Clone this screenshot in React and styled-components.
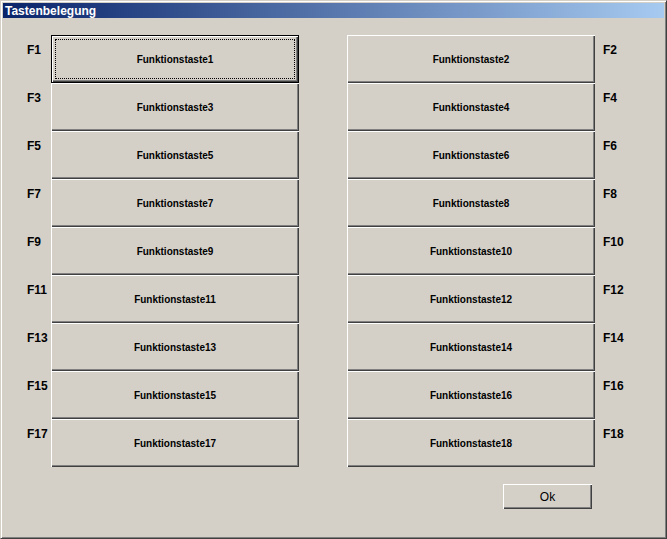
import React from "react";
import styled, { createGlobalStyle } from "styled-components";

const GlobalStyle = createGlobalStyle`
  html, body {
    margin: 0;
    padding: 0;
    background: #d4d0c8;
  }
`;

const rows = Array.from({ length: 9 }, (_, i) => [i * 2 + 1, i * 2 + 2]);

export default function App() {
  return (
    <>
      <GlobalStyle />
      <Window>
        <TitleBar>
          <Title>Tastenbelegung</Title>
        </TitleBar>
        <Panel>
          {rows.map(([l, r]) => (
            <Row key={l}>
              <Label>F{l}</Label>
              <Key $default={l === 1}>Funktionstaste{l}</Key>
              <Key $right>Funktionstaste{r}</Key>
              <Label $right>F{r}</Label>
            </Row>
          ))}
          <Footer>
            <OkButton>Ok</OkButton>
          </Footer>
        </Panel>
      </Window>
    </>
  );
}

const Window = styled.div`
  width: 667px;
  height: 539px;
  box-sizing: border-box;
  background: #d4d0c8;
  border: 1px solid;
  border-color: #d4d0c8 #404040 #404040 #d4d0c8;
  box-shadow: inset 1px 1px 0 #ffffff, inset -1px -1px 0 #808080;
  padding: 2px;
  display: flex;
  flex-direction: column;
  font-family: "Liberation Sans", Arial, sans-serif;
  color: #000;
`;

const TitleBar = styled.div`
  height: 15px;
  display: flex;
  align-items: center;
  padding-left: 2px;
  background: linear-gradient(to right, #0a246a, #a6caf0);
`;

const Title = styled.span`
  color: #fff;
  font-weight: bold;
  font-size: 12px;
`;

const Panel = styled.div`
  display: flex;
  flex-direction: column;
  padding: 17px 0 0 24px;
`;

const Row = styled.div`
  display: flex;
  height: 48px;
`;

const Label = styled.div`
  width: 24px;
  box-sizing: border-box;
  padding-top: 8px;
  padding-left: ${({ $right }) => ($right ? "8px" : "0")};
  font-size: 12px;
  font-weight: bold;
  line-height: 14px;
`;

const Key = styled.div`
  position: relative;
  width: 248px;
  height: 48px;
  box-sizing: border-box;
  margin-left: ${({ $right }) => ($right ? "48px" : "0")};
  display: flex;
  align-items: center;
  justify-content: center;
  font-size: 10px;
  font-weight: bold;
  background: #d4d0c8;
  border: ${({ $default }) => ($default ? "1px solid #000" : "none")};
  box-shadow: inset 1px 1px 0 #ffffff, inset -1px -1px 0 #404040,
    inset -2px -2px 0 #808080;

  &::after {
    content: "";
    display: ${({ $default }) => ($default ? "block" : "none")};
    position: absolute;
    inset: 3px;
    border: 1px dotted #000;
  }
`;

const Footer = styled.div`
  width: 565px;
  display: flex;
  justify-content: flex-end;
  margin-top: 17px;
`;

const OkButton = styled.div`
  width: 89px;
  height: 25px;
  box-sizing: border-box;
  display: flex;
  align-items: center;
  justify-content: center;
  font-size: 12px;
  background: #d4d0c8;
  box-shadow: inset 1px 1px 0 #ffffff, inset -1px -1px 0 #404040,
    inset -2px -2px 0 #808080;
`;
